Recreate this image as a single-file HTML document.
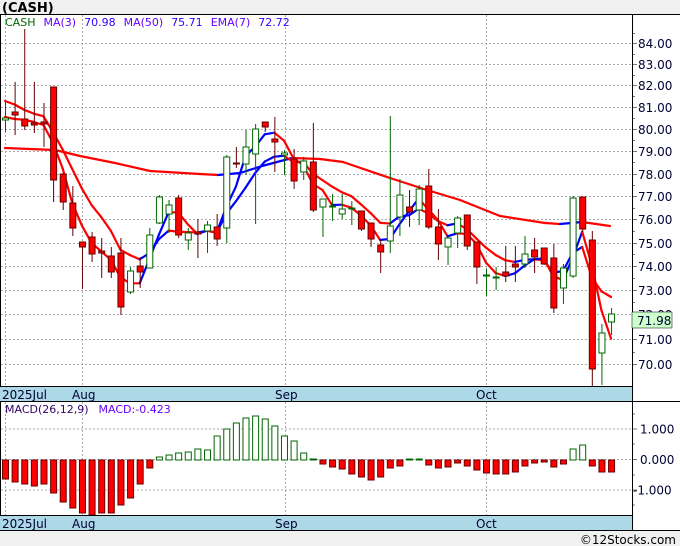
<!DOCTYPE html>
<html><head><meta charset="utf-8"><style>
html,body{margin:0;padding:0;background:#fff;}
body{width:680px;height:546px;overflow:hidden;position:relative;font-family:"DejaVu Sans","Liberation Sans",sans-serif;}
svg{position:absolute;left:0;top:0;}
</style></head><body>
<svg id="c" width="680" height="546" xmlns="http://www.w3.org/2000/svg" font-family="DejaVu Sans, Liberation Sans, sans-serif">
<rect x="0" y="0" width="680" height="546" fill="#fff"/>
<rect x="0" y="0" width="680" height="14" fill="#f0f0f0"/>
<rect x="0" y="531" width="680" height="15" fill="#f0f0f0"/>
<text x="2" y="12" font-size="13" font-weight="bold" fill="#000">(CASH)</text>
<text x="676" y="544" font-size="12" fill="#000" text-anchor="end">©12Stocks.com</text>
<g id="g"></g>
</svg>
<script>
var g=document.getElementById('g');var s='';
function Y(p){return 43+1761*(Math.log(84)-Math.log(p));}
function X(i){return 5+i*9.62;}
// panels
s+='<line x1="0" y1="14.5" x2="680" y2="14.5" stroke="#000"/>';
s+='<line x1="0.5" y1="14" x2="0.5" y2="531" stroke="#000"/>';
// price grid
for(var p=70;p<=84;p++){var y=Math.round(Y(p))+0.5;s+='<line x1="1" y1="'+y+'" x2="632" y2="'+y+'" stroke="#aaa" stroke-dasharray="2,2"/>';
s+='<line x1="632" y1="'+y+'" x2="637" y2="'+y+'" stroke="#777"/>';
s+='<text x="638" y="'+(y+4.5)+'" font-size="12" fill="#000033">'+p+'.00</text>';
var ym=Math.round(Y(p+0.5))+0.5; if(p<84||true){s+='<line x1="632" y1="'+ym+'" x2="635" y2="'+ym+'" stroke="#777"/>';}}
[5,82,285,486].forEach(function(x){s+='<line x1="'+(x+.5)+'" y1="15" x2="'+(x+.5)+'" y2="386" stroke="#aaa" stroke-dasharray="2,2"/>';s+='<line x1="'+(x+.5)+'" y1="402" x2="'+(x+.5)+'" y2="516" stroke="#aaa" stroke-dasharray="2,2"/>';});
// macd grid
[429,459.5,490].forEach(function(y){s+='<line x1="1" y1="'+y+'" x2="632" y2="'+y+'" stroke="#aaa" stroke-dasharray="2,2"/>';});
[[429,'1.000',640],[459.5,'0.000',640],[490,'-1.000',633]].forEach(function(a){s+='<line x1="632" y1="'+a[0]+'" x2="637" y2="'+a[0]+'" stroke="#777"/><text x="'+a[2]+'" y="'+(a[0]+4.5)+'" font-size="12" fill="#000033">'+a[1]+'</text>';});
[414,444,475,505].forEach(function(y){s+='<line x1="632" y1="'+y+'" x2="635" y2="'+y+'" stroke="#777"/>';});
// candles: [top,bottom,wickTop,wickBottom,color g/r]
var C=[[118,120,102,132,'g'],[112,115,82,135,'r'],[119,126,29,130,'r'],[123,125,82,133,'r'],[122,124,103,147,'r'],[87,180,87,202,'r'],[174,202,174,210,'r'],[203,228,186,236,'r'],[242,247,242,289,'r'],[237,254,232,262,'r'],[251,253,238,278,'r'],[256,272,247,278,'r'],[253,307,238,315,'r'],[271,292,267,294,'g'],[266,272,257,288,'r'],[235,268,228,268,'g'],[197,223,195,224,'g'],[205,214,200,233,'g'],[198,235,195,238,'r'],[233,240,228,250,'g'],[232,234,219,258,'r'],[225,231,221,253,'g'],[227,239,214,246,'r'],[157,228,155,243,'g'],[163,164,147,168,'r'],[147,164,130,175,'g'],[129,154,124,224,'g'],[122,127,122,132,'r'],[139,142,117,172,'r'],[153,155,150,175,'g'],[159,181,149,189,'r'],[161,172,157,180,'g'],[162,210,123,212,'r'],[199,207,199,237,'g'],[206,207,194,221,'g'],[209,214,194,219,'g'],[208,209,201,225,'g'],[211,229,211,231,'r'],[223,239,223,247,'r'],[245,252,240,273,'r'],[226,241,116,253,'g'],[195,217,179,236,'g'],[207,212,190,227,'r'],[189,210,185,225,'g'],[186,227,169,229,'r'],[227,244,209,260,'r'],[238,247,236,265,'g'],[218,233,216,248,'g'],[215,246,215,250,'r'],[242,267,242,284,'r'],[275,276,269,296,'g'],[277,278,267,290,'g'],[272,276,246,282,'r'],[264,267,246,282,'r'],[254,264,236,268,'g'],[250,257,238,273,'r'],[248,264,248,265,'r'],[258,308,244,313,'r'],[268,288,264,304,'g'],[198,276,196,278,'g'],[197,229,197,232,'r'],[240,369,231,387,'r'],[333,353,324,385,'g'],[314,322,308,335,'g']];
// lines
function poly(pts,w){var o='';for(var k=1;k<pts.length;k++){var a=pts[k-1],b=pts[k];if(a[1]==null)continue;var col=b[1]<a[1]-0.2?'#0000ff':'#ff0000';o+='<line x1="'+a[0]+'" y1="'+a[1]+'" x2="'+b[0]+'" y2="'+b[1]+'" stroke="'+col+'" stroke-width="'+w+'" stroke-linecap="round"/>';}return o;}
var closes=C.map(function(c){return c[4]=='g'?c[0]:c[1];});
var ma=[],em=[],e=101;
for(var i=0;i<C.length;i++){var m;if(i<2)m=117+i*2;else m=(closes[i]+closes[i-1]+closes[i-2])/3;ma.push([X(i),m]);
if(i>0)e=e+0.25*(closes[i]-e);em.push([X(i),e]);}
var m50=[[5,148],[55,150],[80,156],[115,163],[150,171],[200,174],[218,175],[240,173],[262,166],[292,158],[320,159],[343,162],[390,178],[427,190],[460,200],[500,216],[545,223],[560,224],[582,222],[610,226]];
s+=poly(m50,2.2);
s+=poly(em,2.2);
s+=poly(ma,2.2);
C.forEach(function(c,i){var x=X(i);var wc=c[4]=='g'?'#006600':'#660000';
s+='<line x1="'+(x+.5)+'" y1="'+c[2]+'" x2="'+(x+.5)+'" y2="'+c[3]+'" stroke="'+wc+'"/>';
var h=Math.max(c[1]-c[0],1);
if(c[4]=='g'){s+='<rect x="'+(x-2.5)+'" y="'+c[0]+'" width="6" height="'+h+'" fill="#fff" stroke="#006600"/>';}
else{s+='<rect x="'+(x-2.5)+'" y="'+c[0]+'" width="6" height="'+h+'" fill="#ff0000" stroke="#660000"/>';}});
// macd
var M=[479,482,484,486,484,493,502,508,513,515,513,513,505,498,484,468,457,455,453,452,449,450,436,429,423,418,416,419,426,436,441,453,459,464,467,469,474,477,480,477,468,466,459,459,465,468,467,463,466,470,473,474,474,472,466,463,462,467,464,449,445,466,472,472];
var z=460;
M.forEach(function(v,i){var x=X(i);if(v<z-0.5){s+='<rect x="'+(x-2.5)+'" y="'+v+'" width="6" height="'+(z-v)+'" fill="#fff" stroke="#006600"/>';}
else if(v>z+0.5){s+='<rect x="'+(x-2.5)+'" y="'+z+'" width="6" height="'+(v-z)+'" fill="#ff0000" stroke="#660000"/>';}
else{s+='<line x1="'+(x-2.5)+'" y1="'+z+'" x2="'+(x+3.5)+'" y2="'+z+'" stroke="#006600" stroke-width="2"/>';}});
// bands
[[387,401],[516,530]].forEach(function(b){s+='<rect x="0" y="'+b[0]+'" width="632" height="'+(b[1]-b[0])+'" fill="#add8e6"/><line x1="0" y1="'+(b[0]-.5)+'" x2="632" y2="'+(b[0]-.5)+'" stroke="#000"/><line x1="0" y1="'+(b[1]+.5)+'" x2="632" y2="'+(b[1]+.5)+'" stroke="#000"/>';
[[2,'2025Jul'],[72,'Aug'],[275,'Sep'],[476,'Oct']].forEach(function(t){s+='<text x="'+t[0]+'" y="'+(b[0]+12)+'" font-size="12" fill="#000033">'+t[1]+'</text>';});});
s+='<line x1="0" y1="401.5" x2="680" y2="401.5" stroke="#000"/>';
s+='<line x1="632.5" y1="14" x2="632.5" y2="531" stroke="#000"/>';
s+='<line x1="0" y1="530.5" x2="680" y2="530.5" stroke="#000"/>';
// price box
s+='<rect x="632" y="312" width="40" height="16" fill="#ccffcc" stroke="#000" stroke-width="0.5"/><text x="637" y="325" font-size="12" fill="#000033">71.98</text>';
// legends
s+='<text x="5" y="26" font-size="11"><tspan fill="#006600">CASH</tspan><tspan fill="#6600ff" dx="8">MA(3)</tspan><tspan fill="#3300ff" dx="8">70.98</tspan><tspan fill="#6600ff" dx="8">MA(50)</tspan><tspan fill="#3300ff" dx="8">75.71</tspan><tspan fill="#6600ff" dx="8">EMA(7)</tspan><tspan fill="#3300ff" dx="8">72.72</tspan></text>';
s+='<text x="5" y="413" font-size="11"><tspan fill="#330066">MACD(26,12,9)</tspan><tspan fill="#6600ff" dx="10">MACD:-0.423</tspan></text>';
g.innerHTML=s;
</script>
</body></html>
